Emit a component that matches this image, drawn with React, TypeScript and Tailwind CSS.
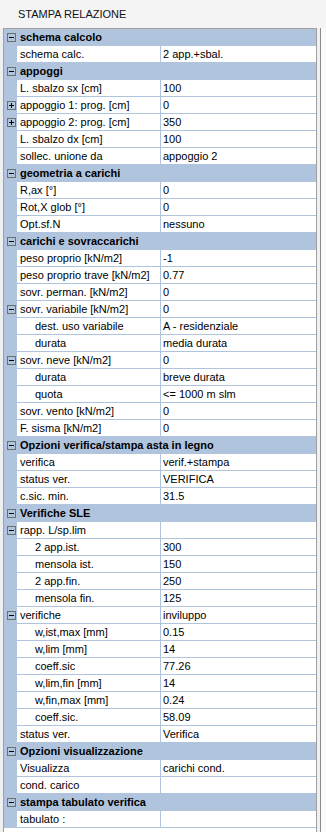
import React from 'react';

type Row = {
  label: string;
  value?: string;
  header?: boolean;
  indent?: boolean;
  toggle?: 'plus' | 'minus';
};

const rows: Row[] = [
  { label: 'schema calcolo', header: true },
  { label: 'schema calc.', value: '2 app.+sbal.' },
  { label: 'appoggi', header: true },
  { label: 'L. sbalzo sx [cm]', value: '100' },
  { label: 'appoggio 1: prog. [cm]', value: '0', toggle: 'plus' },
  { label: 'appoggio 2: prog. [cm]', value: '350', toggle: 'plus' },
  { label: 'L. sbalzo dx [cm]', value: '100' },
  { label: 'sollec. unione da', value: 'appoggio 2' },
  { label: 'geometria a carichi', header: true },
  { label: 'R,ax [°]', value: '0' },
  { label: 'Rot,X glob [°]', value: '0' },
  { label: 'Opt.sf.N', value: 'nessuno' },
  { label: 'carichi e sovraccarichi', header: true },
  { label: 'peso proprio [kN/m2]', value: '-1' },
  { label: 'peso proprio trave [kN/m2]', value: '0.77' },
  { label: 'sovr. perman. [kN/m2]', value: '0' },
  { label: 'sovr. variabile [kN/m2]', value: '0', toggle: 'minus' },
  { label: 'dest. uso variabile', value: 'A - residenziale', indent: true },
  { label: 'durata', value: 'media durata', indent: true },
  { label: 'sovr. neve [kN/m2]', value: '0', toggle: 'minus' },
  { label: 'durata', value: 'breve durata', indent: true },
  { label: 'quota', value: '<= 1000 m slm', indent: true },
  { label: 'sovr. vento [kN/m2]', value: '0' },
  { label: 'F. sisma [kN/m2]', value: '0' },
  { label: 'Opzioni verifica/stampa asta in legno', header: true },
  { label: 'verifica', value: 'verif.+stampa' },
  { label: 'status ver.', value: 'VERIFICA' },
  { label: 'c.sic. min.', value: '31.5' },
  { label: 'Verifiche SLE', header: true },
  { label: 'rapp. L/sp.lim', value: '', toggle: 'minus' },
  { label: '2 app.ist.', value: '300', indent: true },
  { label: 'mensola ist.', value: '150', indent: true },
  { label: '2 app.fin.', value: '250', indent: true },
  { label: 'mensola fin.', value: '125', indent: true },
  { label: 'verifiche', value: 'inviluppo', toggle: 'minus' },
  { label: 'w,ist,max [mm]', value: '0.15', indent: true },
  { label: 'w,lim [mm]', value: '14', indent: true },
  { label: 'coeff.sic', value: '77.26', indent: true },
  { label: 'w,lim,fin [mm]', value: '14', indent: true },
  { label: 'w,fin,max [mm]', value: '0.24', indent: true },
  { label: 'coeff.sic.', value: '58.09', indent: true },
  { label: 'status ver.', value: 'Verifica' },
  { label: 'Opzioni visualizzazione', header: true },
  { label: 'Visualizza', value: 'carichi cond.' },
  { label: 'cond. carico', value: '' },
  { label: 'stampa tabulato verifica', header: true },
  { label: 'tabulato :', value: '' },
];

function ToggleBox({ kind }: { kind: 'plus' | 'minus' }) {
  return (
    <div className="relative h-[9px] w-[9px] border border-[#6f6f6f]">
      <div className="absolute left-[1px] top-[3px] h-[1px] w-[5px] bg-black" />
      {kind === 'plus' && <div className="absolute left-[3px] top-[1px] h-[5px] w-[1px] bg-black" />}
    </div>
  );
}

export default function App() {
  return (
    <div className="flex h-[832px] w-[326px] flex-col overflow-hidden bg-[#f0f0f0] font-['Liberation_Sans',Arial,sans-serif] text-[11px] text-black">
      <div className="flex h-[28px] items-center bg-[#f4f4f4] pl-[18px] text-[11px] text-[#111]">
        STAMPA RELAZIONE
      </div>
      <div className="flex flex-1">
        <div className="w-[3px] bg-[#f0f0f0]" />
        <div className="flex w-[314px] flex-col border border-b-0 border-[#a0a0a0] bg-white">
          {rows.map((row, i) =>
            row.header ? (
              <div key={i} className="flex h-[17px] items-center bg-[#b0c4de]">
                <div className="flex w-[13px] justify-center pl-[1px]">
                  <ToggleBox kind="minus" />
                </div>
                <div className="pl-[3px] font-bold leading-none">{row.label}</div>
              </div>
            ) : (
              <div key={i} className="flex h-[17px]">
                <div className="flex w-[13px] items-center justify-center bg-[#b0c4de] pl-[1px]">
                  {row.toggle && <ToggleBox kind={row.toggle} />}
                </div>
                <div
                  className={`flex w-[144px] items-center border-b border-r border-[#b0c4de] leading-none ${row.indent ? 'pl-[18px]' : 'pl-[3px]'}`}
                >
                  {row.label}
                </div>
                <div className="flex flex-1 items-center border-b border-[#b0c4de] pl-[2px] leading-none">
                  {row.value}
                </div>
              </div>
            )
          )}
        </div>
        <div className="w-[3px] bg-[#f0f0f0]" />
        <div className="w-[1px] bg-[#8c8c8c]" />
        <div className="flex-1 bg-[#fafafa]" />
      </div>
    </div>
  );
}
